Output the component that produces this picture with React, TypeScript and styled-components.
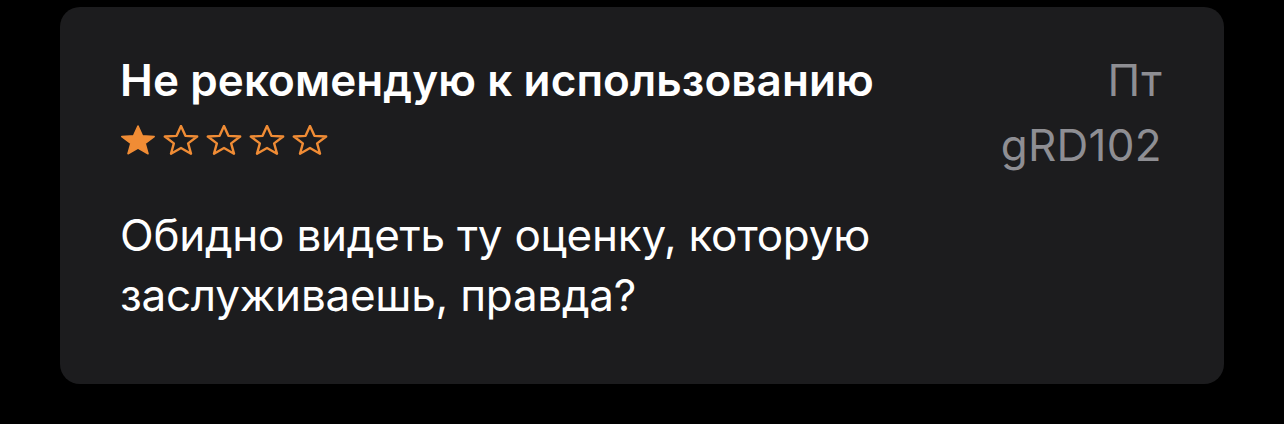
import React from "react";
import styled, { createGlobalStyle } from "styled-components";

const Global = createGlobalStyle`
  html, body { margin: 0; padding: 0; background: #000; }
  body { font-family: Inter, "Noto Sans", sans-serif; -webkit-font-smoothing: antialiased; }
`;

const Page = styled.div`
  padding: 7px 60px 0 60px;
`;

const Card = styled.div`
  box-sizing: border-box;
  height: 377px;
  background: #1c1c1e;
  border-radius: 20px;
  padding: 48px 62px 0 60px;
  display: flex;
  flex-direction: column;
`;

const Header = styled.div`
  display: flex;
  justify-content: space-between;
  align-items: flex-start;
`;

const Left = styled.div`
  display: flex;
  flex-direction: column;
`;

const Right = styled.div`
  display: flex;
  flex-direction: column;
  align-items: flex-end;
  gap: 15px;
`;

const Title = styled.div`
  font-size: 44px;
  font-weight: 600;
  color: #fff;
  line-height: 50px;
  letter-spacing: 0.1px;
`;

const Meta = styled.div`
  font-size: 44px;
  font-weight: 400;
  color: #8e8e93;
  line-height: 50px;
  letter-spacing: 0.3px;
`;

const Stars = styled.div`
  display: flex;
  gap: 7px;
  margin-top: 20px;
  height: 30px;
  svg { display: block; }
`;

const Body = styled.div`
  margin-top: 35px;
  font-size: 44px;
  font-weight: 400;
  color: #fff;
  line-height: 60px;
  letter-spacing: -0.25px;
  max-width: 820px;
`;

const STAR =
  "M18 1 L22.41 10.84 L34.17 11.57 L25.13 18.39 L27.99 28.68 L18 23.05 L8.01 28.68 L10.87 18.39 L1.83 11.57 L13.59 10.84 Z";

const Star = ({ filled }: { filled: boolean }) => (
  <svg width="36" height="30" viewBox="0 0 36 30">
    <path
      d={STAR}
      fill={filled ? "#f08c35" : "none"}
      stroke="#f08c35"
      strokeWidth={filled ? 1.6 : 2.4}
      strokeLinejoin="round"
    />
  </svg>
);

export default function App() {
  return (
    <Page>
      <Global />
      <Card>
        <Header>
          <Left>
            <Title>Не рекомендую к использованию</Title>
            <Stars>
              {[0, 1, 2, 3, 4].map((i) => (
                <Star key={i} filled={i < 1} />
              ))}
            </Stars>
          </Left>
          <Right>
            <Meta>Пт</Meta>
            <Meta>gRD102</Meta>
          </Right>
        </Header>
        <Body>Обидно видеть ту оценку, которую заслуживаешь, правда?</Body>
      </Card>
    </Page>
  );
}
